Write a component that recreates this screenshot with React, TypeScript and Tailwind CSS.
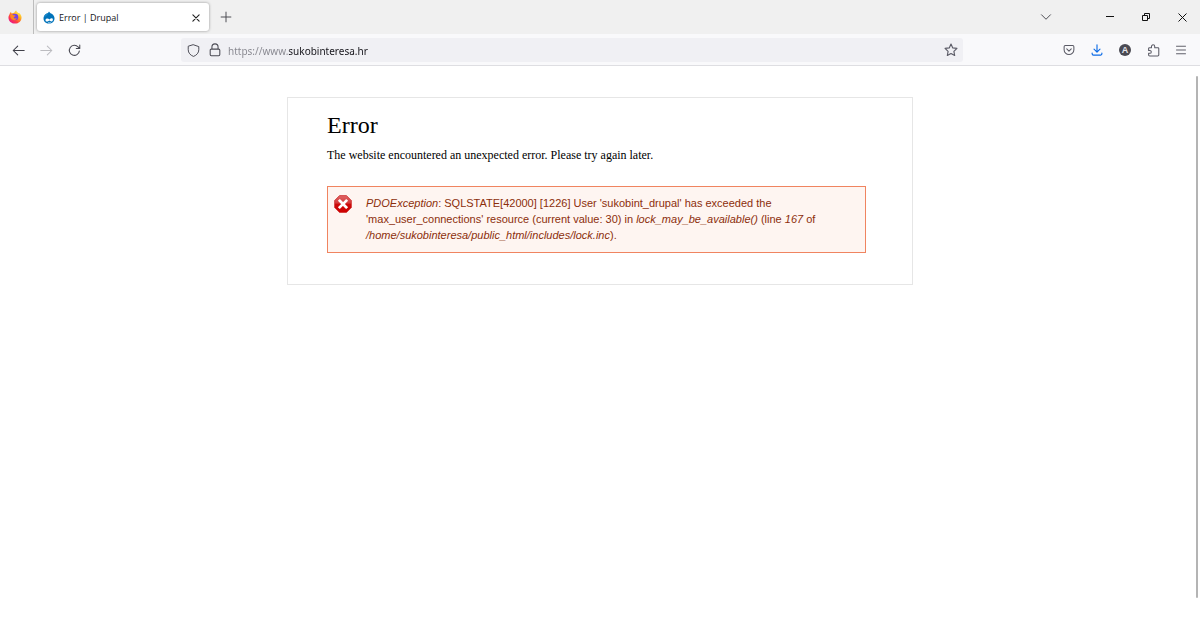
import React from "react";

type IconProps = { className?: string; children: React.ReactNode; size?: number };

function Icon({ className = "", children, size = 16 }: IconProps) {
  return (
    <svg
      width={size}
      height={size}
      viewBox="0 0 16 16"
      fill="none"
      stroke="currentColor"
      strokeWidth="1.1"
      strokeLinecap="round"
      strokeLinejoin="round"
      className={"shrink-0 " + className}
      aria-hidden="true"
    >
      {children}
    </svg>
  );
}

function IconButton({ label, className = "", children }: { label: string; className?: string; children: React.ReactNode }) {
  return (
    <button type="button" aria-label={label} className={"flex h-7 shrink-0 items-center justify-center " + className}>
      {children}
    </button>
  );
}

function FirefoxLogo() {
  return (
    <svg width="14" height="14" viewBox="0 0 32 32" aria-hidden="true">
      <defs>
        <linearGradient id="flame" x1="0.85" y1="0.1" x2="0.2" y2="0.95">
          <stop offset="0" stopColor="#fff04a" />
          <stop offset="0.35" stopColor="#ffa61f" />
          <stop offset="0.7" stopColor="#ff4040" />
          <stop offset="1" stopColor="#e9158c" />
        </linearGradient>
      </defs>
      <path
        d="M3 11C4 7 6 5 7 4c0 2 .5 3 1.500 4 2-1 4-1.500 6-1.500C15 4 17 1.500 19 1c0 3 3 4.500 5 6.500 0 0 1-.5 .5-1.500C28 8 31 12.500 31 17c0 8-6.500 14-15 14S1 25 1 17c0-2 .8-4 2-6z"
        fill="url(#flame)"
      />
      <circle cx="16" cy="16" r="7.500" fill="#7542e5" />
      <path d="M5 12c3-2 6-1 8 0 2 .3 4 .5 4 1.500s-3 1.500-4 3c0 3 4 4 7 2-1 4-5 6-9 4-4-1-6-5-6-10.500z" fill="#ff8a1f" />
      <path d="M17 8c4-1 8 3 8 7 1-3 0-6-2-8-2-1-4-2-4-4-1 1-2 3-2 5z" fill="#ffd43a" />
    </svg>
  );
}

function DrupalLogo() {
  return (
    <svg width="12" height="13" viewBox="0 0 24 26" aria-hidden="true">
      <path d="M12 1c2 3 4 4 6 5 3 2 5 5 5 9 0 6-5 10-11 10S1 21 1 15c0-4 2-7 5-9 2-1 5-2 6-5z" fill="#0073ba" />
      <path d="M12 1c-1 3-4 4-6 5-2 1-4 4-4 6 4-1 8-4 10-11z" fill="#1b86c6" />
      <path d="M5 18c0-3 5-4 8-1 2-2 4-3 6-2 2 2 0 6-2 6-2 0-3-2-4-2-2 0-2 2-4 2-3 0-4-1-4-3z" fill="#fff" />
      <path d="M10 22.700c1.500 1 4 1 5.500 0" stroke="#fff" strokeWidth="1.200" fill="none" />
    </svg>
  );
}

function ErrorIcon() {
  return (
    <svg width="18" height="18" viewBox="0 0 18 18" className="shrink-0" role="img" aria-label="Error">
      <defs>
        <linearGradient id="red" x1="0" y1="0" x2="0" y2="1">
          <stop offset="0" stopColor="#df6565" />
          <stop offset="0.45" stopColor="#d43a3a" />
          <stop offset="0.5" stopColor="#cc0a0a" />
          <stop offset="1" stopColor="#cf0000" />
        </linearGradient>
      </defs>
      <path d="M5.500 .6h7l4.900 4.900v7l-4.900 4.900h-7L.6 12.500v-7z" fill="url(#red)" stroke="#cc2424" strokeWidth=".7" strokeLinejoin="round" />
      <path d="M5.800 5.800l6.400 6.400M12.200 5.800l-6.400 6.400" stroke="#fff" strokeWidth="2.700" strokeLinecap="square" />
    </svg>
  );
}

function TabStrip() {
  return (
    <div className="flex h-[34px] items-stretch bg-[#f0f0f0] text-[#4a4a50]">
      <div className="flex w-[34px] shrink-0 items-center justify-center border-r border-[#bdbdbd] pr-[3px]">
        <FirefoxLogo />
      </div>
      <div className="my-[3px] ml-[3px] flex w-[172px] shrink-0 items-center rounded-[3px] bg-white pt-px pr-[7px] pl-[6px] shadow-[0_0_3px_rgba(0,0,0,0.4)]">
        <DrupalLogo />
        <span className="ml-1 flex-1 font-['Open_Sans','Noto_Sans',sans-serif] text-[9px] text-[#15141a]">Error | Drupal</span>
        <button type="button" aria-label="Close tab" className="flex h-4 w-3 items-center justify-center">
          <Icon size={10} className="text-[#222]">
            <path d="M3 3l10 10M13 3L3 13" strokeWidth="1.800" />
          </Icon>
        </button>
      </div>
      <IconButton label="New tab" className="mt-[3px] ml-px w-8">
        <Icon size={12}>
          <path d="M8 1.500v13M1.500 8h13" strokeWidth="1.300" />
        </Icon>
      </IconButton>
      <div className="flex flex-1 items-center justify-end">
        <IconButton label="List all tabs" className="mr-[28px] w-9">
          <Icon size={12}>
            <path d="M2 5l6 6 6-6" strokeWidth="1.300" />
          </Icon>
        </IconButton>
        <IconButton label="Minimize" className="w-9 text-[#111]">
          <svg width="8" height="8" viewBox="0 0 8 8" stroke="currentColor" aria-hidden="true">
            <path d="M0 3.500h8" />
          </svg>
        </IconButton>
        <IconButton label="Restore" className="w-9 text-[#111]">
          <svg width="8" height="8" viewBox="0 0 8 8" fill="none" stroke="currentColor" aria-hidden="true">
            <path d="M.5 2.500h5v5h-5zM2.500 2.500v-2h5v5h-2" />
          </svg>
        </IconButton>
        <IconButton label="Close" className="w-9 text-[#111]">
          <svg width="9" height="9" viewBox="0 0 9 9" stroke="currentColor" aria-hidden="true">
            <path d="M.5 .5l8 8M8.500 .5l-8 8" />
          </svg>
        </IconButton>
      </div>
    </div>
  );
}

function Toolbar() {
  return (
    <div className="flex h-8 items-center border-b border-[#dedee2] bg-[#f9f9fb] pt-px text-[#5b5b66]">
      <div className="flex w-[181px] shrink-0 pl-1">
        <IconButton label="Back" className="w-7 text-[#3f3f48]">
          <Icon size={13}>
            <path d="M15 8H1.500M7 2.500L1.500 8 7 13.500" strokeWidth="1.300" />
          </Icon>
        </IconButton>
        <IconButton label="Forward" className="w-7 text-[#bcbcc0]">
          <Icon size={13}>
            <path d="M1 8h13.500M9 2.500L14.500 8 9 13.500" strokeWidth="1.300" />
          </Icon>
        </IconButton>
        <IconButton label="Reload" className="w-7 text-[#4a4a53]">
          <Icon size={13}>
            <path d="M14 8.500A6.200 6.200 0 1 1 12.500 3.700L14.500 5.500M14.500 1.200v4.300h-4.300" strokeWidth="1.300" />
          </Icon>
        </IconButton>
      </div>
      <div className="flex h-6 min-w-0 flex-1 items-center rounded-[3px] bg-[#f0f0f4] pr-[5px] pl-[6px]">
        <Icon size={13} className="text-[#4a4a53]">
          <path d="M8 1L14.500 3.200V7c0 4-2.500 6.700-6.500 8.300C4 13.700 1.500 11 1.500 7V3.200z" strokeWidth="1.200" />
        </Icon>
        <Icon size={14} className="ml-2 text-[#4a4a53]">
          <path d="M4.500 7V4.500a3.500 3.500 0 0 1 7 0V7M3.800 7h8.400a1.300 1.300 0 0 1 1.300 1.300v4.900a1.300 1.300 0 0 1-1.300 1.300H3.800a1.300 1.300 0 0 1-1.300-1.300V8.300A1.300 1.300 0 0 1 3.800 7z" strokeWidth="1.200" />
        </Icon>
        <input
          type="text"
          aria-label="Address"
          defaultValue="https://www.sukobinteresa.hr"
          className="ml-[6px] h-5 min-w-0 flex-1 bg-[linear-gradient(to_right,#85858d_61px,#15141a_61px)] bg-clip-text pt-px font-['Noto_Sans',sans-serif] text-[10px] text-transparent outline-none"
        />
        <IconButton label="Bookmark this page" className="w-[14px]">
          <Icon size={14}>
            <path d="M8 1.200l2 4.400 4.800.6-3.500 3.300.9 4.800L8 12l-4.200 2.300.9-4.800L1.200 6.200 6 5.600z" strokeWidth="1.300" />
          </Icon>
        </IconButton>
      </div>
      <div className="flex w-[237px] shrink-0 justify-end pr-[5px]">
        <IconButton label="Save to Pocket" className="w-7">
          <Icon size={12}>
            <path d="M3 2h10a1.500 1.500 0 0 1 1.500 1.500V7.500a6.500 6.500 0 0 1-13 0v-4A1.500 1.500 0 0 1 3 2zM5 6.500l3 3 3-3" strokeWidth="1.400" />
          </Icon>
        </IconButton>
        <IconButton label="Downloads" className="w-7 text-[#0b6ae6]">
          <Icon size={12}>
            <path d="M8 1v9.500M4 6.800l4 4 4-4M1.500 12v1a1.800 1.800 0 0 0 1.800 1.800h9.400a1.800 1.800 0 0 0 1.800-1.800v-1" strokeWidth="1.500" />
          </Icon>
        </IconButton>
        <IconButton label="Account" className="w-7">
          <span className="flex size-3 items-center justify-center rounded-full bg-[#4a4a53] font-['Liberation_Sans',sans-serif] text-[9px] leading-none font-bold text-[#e8e8ee]">
            A
          </span>
        </IconButton>
        <IconButton label="Extensions" className="w-7">
          <Icon size={13}>
            <path d="M5.500 4.500V3a2 2 0 0 1 4 0v1.500h4a1 1 0 0 1 1 1v8a1.300 1.300 0 0 1-1.300 1.300H3.300A1.300 1.300 0 0 1 2 13.500v-2h1.500a1.700 1.700 0 0 0 0-3.500H2V5.500a1 1 0 0 1 1-1z" strokeWidth="1.300" />
          </Icon>
        </IconButton>
        <IconButton label="Open application menu" className="w-7">
          <Icon size={12}>
            <path d="M2 3h12M2 8h12M2 13h12" strokeWidth="1.300" />
          </Icon>
        </IconButton>
      </div>
    </div>
  );
}

export default function App() {
  return (
    <div className="relative flex min-h-screen flex-col bg-white">
      <header>
        <TabStrip />
        <Toolbar />
      </header>
      <main className="flex-1 px-4 pt-[31px]">
        <div className="mx-auto max-w-[626px] border border-[#e6e6e6] pt-[13px] pr-[46px] pb-[31px] pl-[39px]">
          <h1 className="font-['Liberation_Serif',serif] text-[24px] leading-[28px] text-black">Error</h1>
          <p className="mt-2 font-['Liberation_Serif',serif] text-[12px] leading-4 text-black">
            The website encountered an unexpected error. Please try again later.
          </p>
          <div className="mt-[23px] flex border border-[#f08460] bg-[#fef5f1] pt-2 pr-[40px] pb-[9px] pl-[6px] text-[#8c2e0b]">
            <ErrorIcon />
            <p className="ml-[14px] min-w-0 flex-1 font-['Liberation_Sans',sans-serif] text-[11px] leading-4">
              <em>PDOException</em>: SQLSTATE[42000] [1226] User 'sukobint_drupal' has exceeded the 'max_user_connections'
              resource (current value: 30) in <em>lock_may_be_available()</em> (line <em>167</em> of{" "}
              <em>/home/sukobinteresa/public_html/includes/lock.inc</em>).
            </p>
          </div>
        </div>
      </main>
      <div className="absolute top-[76px] right-[2px] bottom-9 w-[2px] rounded-full bg-[#b4b4b4]" />
    </div>
  );
}
